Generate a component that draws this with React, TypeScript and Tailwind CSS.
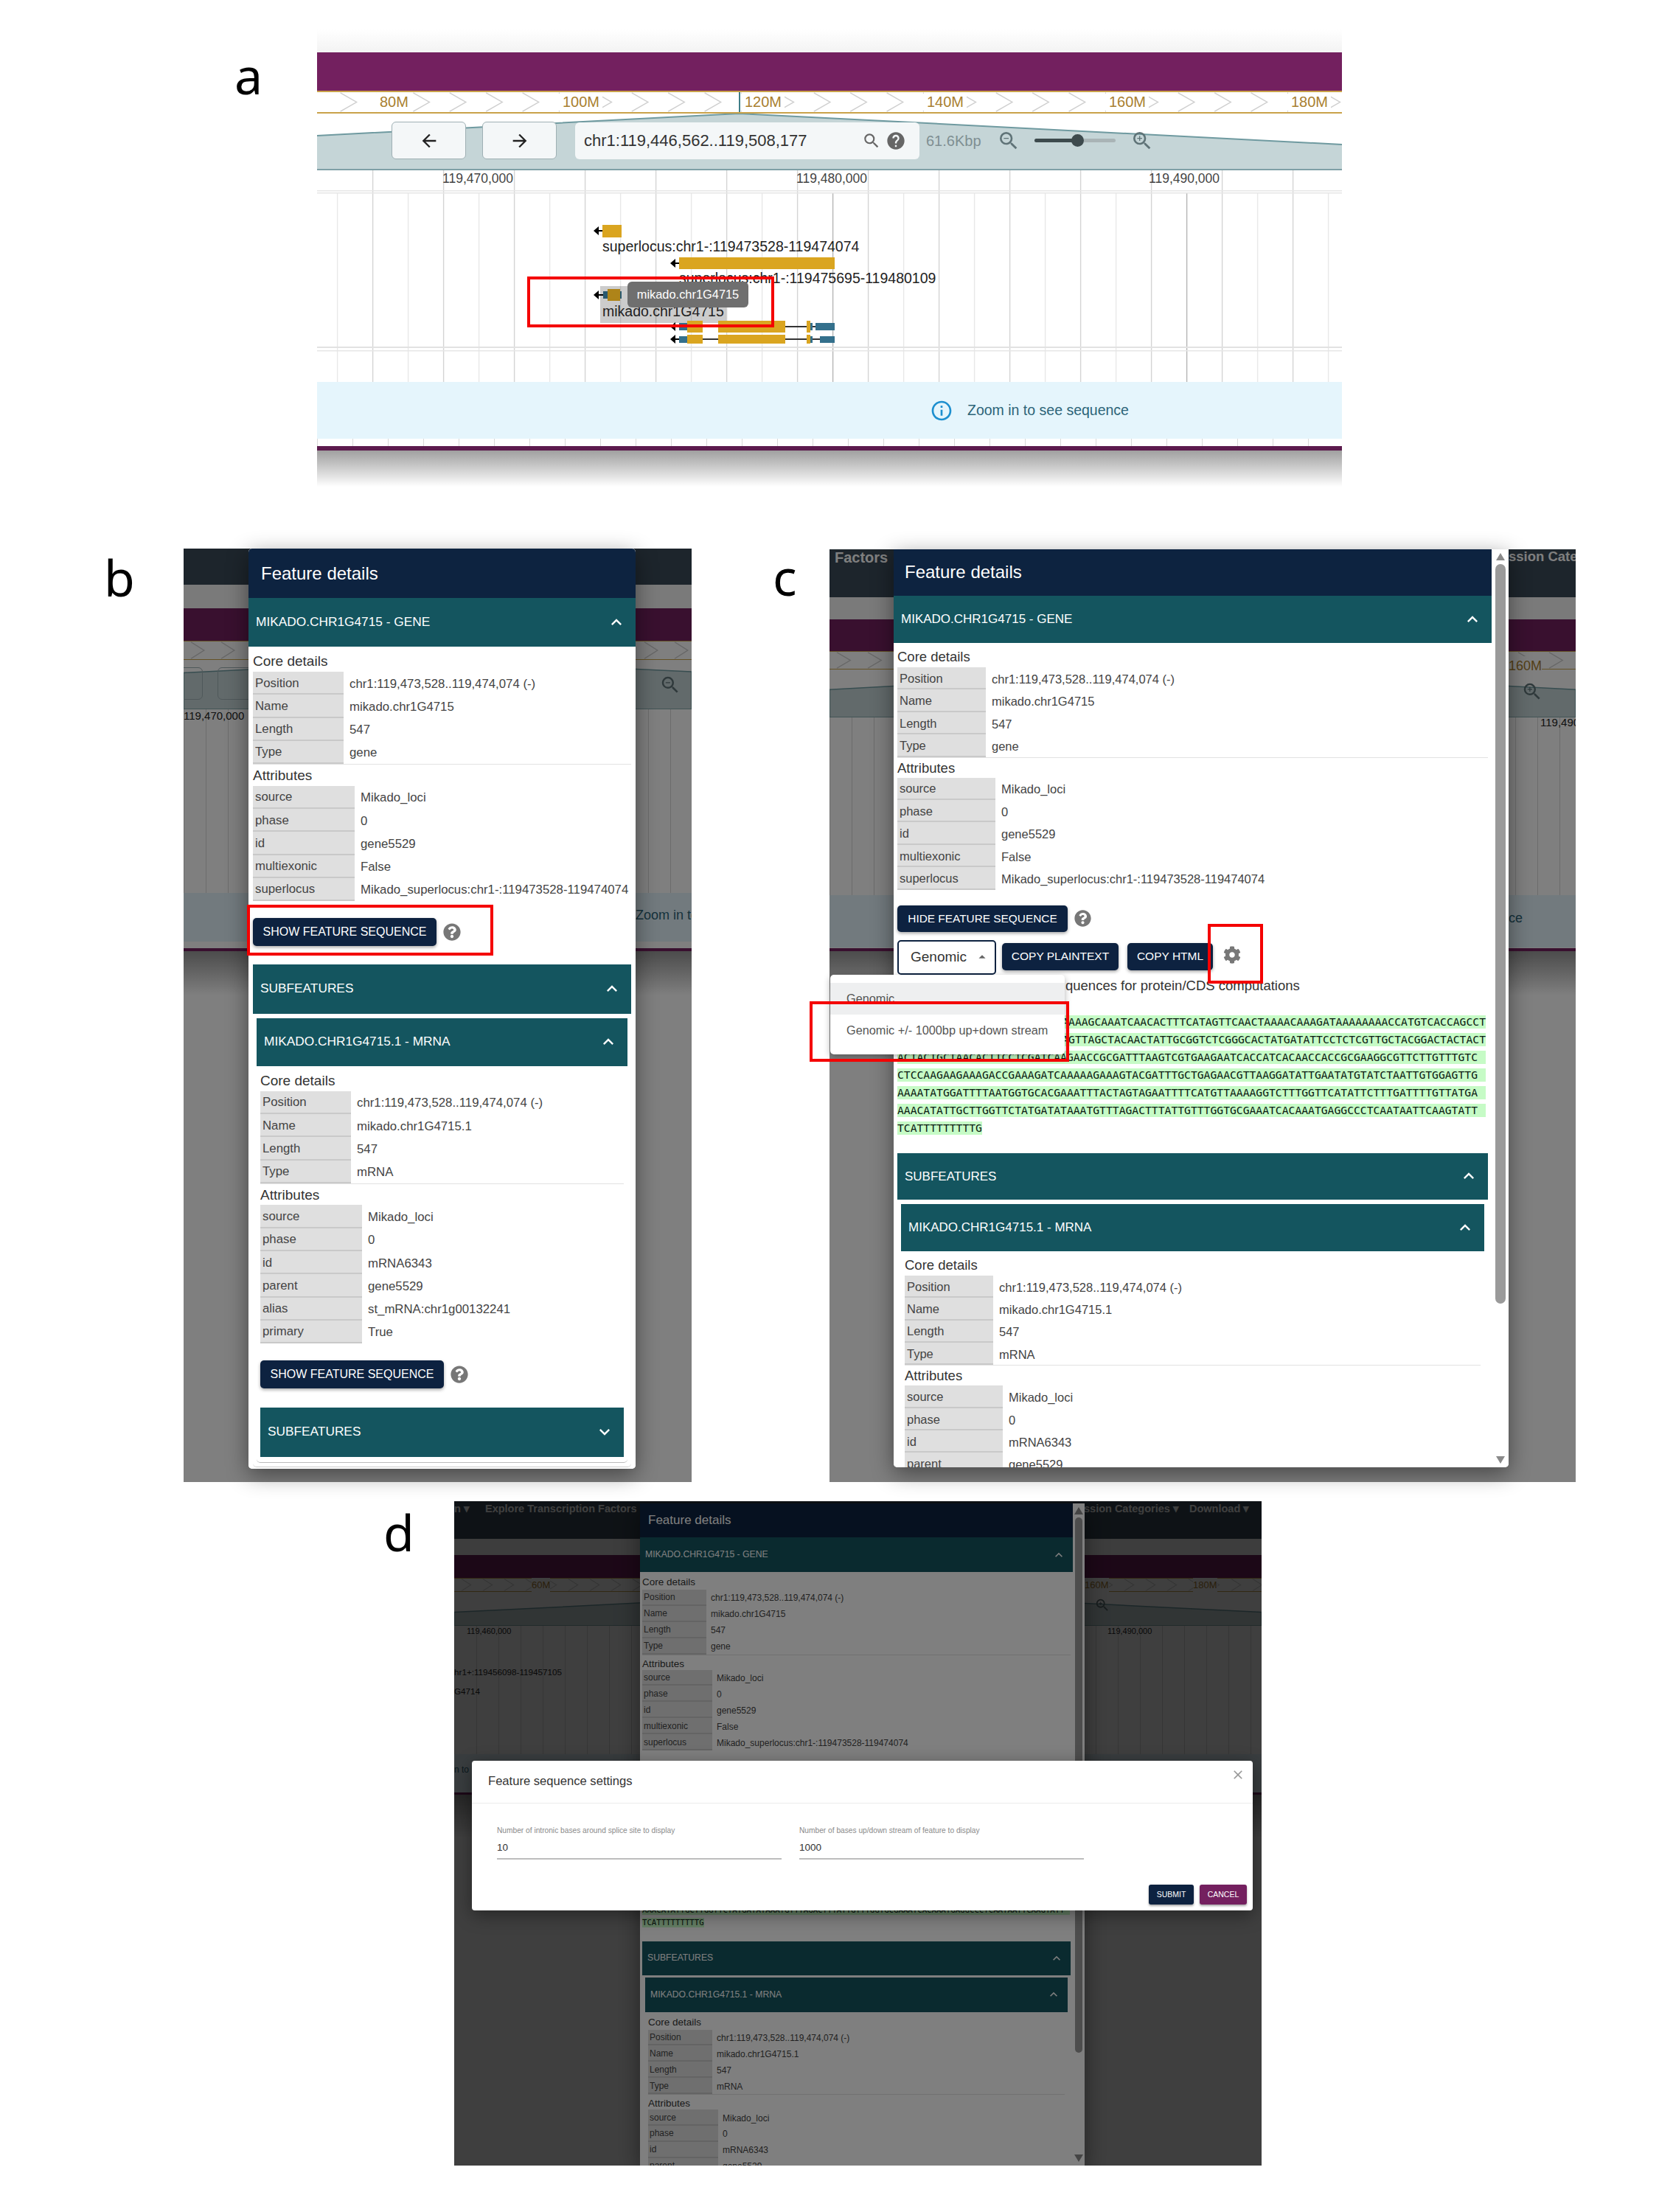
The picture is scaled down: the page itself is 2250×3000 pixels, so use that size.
import React from "react";
import { FaCog, FaQuestionCircle } from "react-icons/fa";
import {
  MdArrowBack,
  MdArrowDropUp,
  MdArrowForward,
  MdClose,
  MdExpandLess,
  MdExpandMore,
  MdHelp,
  MdInfoOutline,
  MdSearch,
  MdZoomIn,
  MdZoomOut,
} from "react-icons/md";

const geneCore = [
  ["Position", "chr1:119,473,528..119,474,074 (-)"],
  ["Name", "mikado.chr1G4715"],
  ["Length", "547"],
  ["Type", "gene"],
];
const geneAttrs = [
  ["source", "Mikado_loci"],
  ["phase", "0"],
  ["id", "gene5529"],
  ["multiexonic", "False"],
  ["superlocus", "Mikado_superlocus:chr1-:119473528-119474074"],
];
const mrnaCore = [
  ["Position", "chr1:119,473,528..119,474,074 (-)"],
  ["Name", "mikado.chr1G4715.1"],
  ["Length", "547"],
  ["Type", "mRNA"],
];
const mrnaAttrs = [
  ["source", "Mikado_loci"],
  ["phase", "0"],
  ["id", "mRNA6343"],
  ["parent", "gene5529"],
  ["alias", "st_mRNA:chr1g00132241"],
  ["primary", "True"],
];
const seqLines = [
  "AAAAGCAAATCAACACTTTCATAGTTCAACTAAAACAAAGATAAAAAAAACCATGTCACCAGCCT",
  "AGTTAGCTACAACTATTGCGGTCTCGGGCACTATGATATTCCTCTCGTTGCTACGGACTACTACT",
  "ACTACTGCTAACACTTCCTCGATCAAGAACCGCGATTTAAGTCGTGAAGAATCACCATCACAACCACCGCGAAGGCGTTCTTGTTTGTC",
  "CTCCAAGAAGAAAGACCGAAAGATCAAAAAGAAAGTACGATTTGCTGAGAACGTTAAGGATATTGAATATGTATCTAATTGTGGAGTTG",
  "AAAATATGGATTTTAATGGTGCACGAAATTTACTAGTAGAATTTTCATGTTAAAAGGTCTTTGGTTCATATTCTTTGATTTTGTTATGA",
  "AAACATATTGCTTGGTTCTATGATATAAATGTTTAGACTTTATTGTTTGGTGCGAAATCACAAATGAGGCCCTCAATAATTCAAGTATT",
  "TCATTTTTTTTTG",
];

// one set of sizes per screenshot, the three dialogs are the same thing at different zoom
const SIZE_B = {
  header: "h-[67px] pl-[17px] text-[24px]",
  geneAcc: "h-[66px] pl-[10px] pr-[12px] text-[17.3px]",
  subAcc: "h-[67px] pl-[10px] pr-[12px] text-[17.3px]",
  mrnaAcc: "h-[65px] pl-[10px] pr-[12px] text-[17.3px]",
  accIcon: "size-[28px]",
  body: "px-[6px]",
  nested: "mt-[6px] mx-[5px]",
  nestedBody: "px-[5px]",
  text: "text-[16.8px]",
  coreHead: "h-[34px] pt-[8px] text-[19px] leading-[24px]",
  attrHead: "h-[29.5px] pt-[3px] text-[19px] leading-[24px]",
  row: "h-[31.3px]",
  keyCore: "w-[123px] pl-[3px] pt-[1px]",
  keyAttr: "w-[138px] pl-[3px] pt-[1px]",
  valCore: "pl-[8px] pt-[1px]",
  btnRow: "mt-[22.5px]",
  btn: "h-[38px] w-[249px] text-[16px]",
  help: "ml-[9px] size-[24px]",
  subTop: "mt-[25px]",
  nestedSubTop: "mt-[26px]",
  tools: "",
  select: "",
  copy1: "",
  copy2: "",
  gear: "",
  note: "",
  seq: "",
  seqLine: "",
  seqHighlight: "",
  seqWidth: "",
};

const SIZE_C = {
  header: "h-[63px] pl-[15px] pb-[2px] text-[24px]",
  geneAcc: "h-[64px] pl-[10px] pr-[12px] text-[17px]",
  subAcc: "h-[63px] pl-[10px] pr-[12px] text-[17px]",
  mrnaAcc: "h-[64px] pl-[10px] pr-[12px] text-[17px]",
  accIcon: "size-[28px]",
  body: "px-[5px]",
  nested: "mt-[6px] mx-[5px]",
  nestedBody: "px-[5px]",
  text: "text-[16.5px]",
  coreHead: "h-[33px] pt-[7px] text-[18.5px] leading-[24px]",
  attrHead: "h-[28px] pt-[2px] text-[18.5px] leading-[24px]",
  row: "h-[30.4px]",
  keyCore: "w-[120px] pl-[3px] pt-[2px]",
  keyAttr: "w-[133px] pl-[3px] pt-[2px]",
  valCore: "pl-[8px] pt-[2px]",
  btnRow: "mt-[21px]",
  btn: "h-[36px] w-[231px] text-[15.4px]",
  help: "ml-[9px] size-[23px]",
  subTop: "mt-[22px]",
  nestedSubTop: "mt-[26px]",
  tools: "mt-[11px] h-[47px]",
  select: "h-[47px] w-[134px] pl-[16px] pr-[6px] text-[19px] border-2",
  copy1: "ml-[8px] h-[37px] w-[158px] text-[15.5px]",
  copy2: "ml-[12px] h-[37px] w-[116px] text-[15.5px]",
  gear: "ml-[14px] size-[24px]",
  note: "h-[30px] pl-[228px] text-[18.5px] leading-[30px]",
  seq: "mt-[23px] text-[14.7px]",
  seqLine: "h-[23.9px]",
  seqHighlight: "h-[18px]",
  seqWidth: "w-[798px]",
};

const SIZE_D = {
  header: "h-[46px] pl-[11px] text-[17px]",
  geneAcc: "h-[47px] pl-[7px] pr-[9px] text-[12.2px]",
  subAcc: "h-[46px] pl-[7px] pr-[9px] text-[12.2px]",
  mrnaAcc: "h-[46.5px] pl-[7px] pr-[9px] text-[12.2px]",
  accIcon: "size-[20px]",
  body: "px-[3px]",
  nested: "mt-[3.5px] mx-[4px]",
  nestedBody: "px-[4px]",
  text: "text-[12px]",
  coreHead: "h-[24px] pt-[5px] text-[13.5px] leading-[18px]",
  attrHead: "h-[21px] pt-[3px] text-[13.5px] leading-[18px]",
  row: "h-[21.9px]",
  keyCore: "w-[87px] pl-[2px] pt-[1px]",
  keyAttr: "w-[95px] pl-[2px] pt-[1px]",
  valCore: "pl-[6px] pt-[1px]",
  btnRow: "mt-[16px]",
  btn: "h-[26px] w-[168px] text-[11.2px]",
  help: "ml-[6px] size-[17px]",
  subTop: "mt-[16.5px]",
  nestedSubTop: "mt-[18px]",
  tools: "mt-[8px] h-[34px]",
  select: "h-[34px] w-[97px] pl-[12px] pr-[4px] text-[14px] border",
  copy1: "ml-[6px] h-[27px] w-[114px] text-[11px]",
  copy2: "ml-[9px] h-[27px] w-[84px] text-[11px]",
  gear: "ml-[10px] size-[17px]",
  note: "h-[21px] pl-[165px] text-[13.5px] leading-[21px]",
  seq: "mt-[18px] text-[10.7px]",
  seqLine: "h-[17px]",
  seqHighlight: "h-[13px]",
  seqWidth: "w-[580px]",
};

type Sizes = typeof SIZE_B;

const Accordion = ({
  title,
  open = true,
  className,
  iconClass,
}: {
  title: string;
  open?: boolean;
  className: string;
  iconClass: string;
}) => (
  <div className={`flex shrink-0 items-center justify-between bg-[#14555f] uppercase text-white ${className}`}>
    <span>{title}</span>
    {open ? <MdExpandLess className={iconClass} /> : <MdExpandMore className={iconClass} />}
  </div>
);

const KvRows = ({
  rows,
  keyClass,
  s,
}: {
  rows: string[][];
  keyClass: string;
  s: Sizes;
}) => (
  <div className={s.text}>
    {rows.map(([k, v]) => (
      <div key={k} className={`flex items-stretch ${s.row}`}>
        <div className={`flex shrink-0 items-center border-b-2 border-[#c9c9c9] bg-[#dfdfdf] text-[#444] ${keyClass}`}>
          {k}
        </div>
        <div className={`flex items-center whitespace-nowrap text-[#444] ${s.valCore}`}>{v}</div>
      </div>
    ))}
  </div>
);

const Details = ({ core, attrs, s }: { core: string[][]; attrs: string[][]; s: Sizes }) => (
  <>
    <div className={`text-[#333] ${s.coreHead}`}>Core details</div>
    <KvRows rows={core} keyClass={s.keyCore} s={s} />
    <div className={`border-t border-[#e2e2e2] text-[#333] ${s.attrHead}`}>Attributes</div>
    <KvRows rows={attrs} keyClass={s.keyAttr} s={s} />
  </>
);

const NavyButton = ({ label, className }: { label: string; className: string }) => (
  <button className={`flex shrink-0 items-center justify-center whitespace-nowrap rounded-[5px] bg-[#0d2240] text-white shadow-[0_2px_4px_rgba(0,0,0,0.35)] ${className}`}>
    {label}
  </button>
);

const SequencePanel = ({ s }: { s: Sizes }) => (
  <>
    <div className={`flex items-start ${s.tools}`}>
      <div className={`flex shrink-0 items-center justify-between rounded-[5px] border-[#0d2240] text-[#333] ${s.select}`}>
        Genomic
        <MdArrowDropUp className="size-[22px] text-[#666]" />
      </div>
      <NavyButton label="COPY PLAINTEXT" className={`mt-[4px] ${s.copy1}`} />
      <NavyButton label="COPY HTML" className={`mt-[4px] ${s.copy2}`} />
      <FaCog className={`mt-[8px] text-[#777] ${s.gear}`} />
    </div>
    <div className={`whitespace-nowrap text-[#333] ${s.note}`}>quences for protein/CDS computations</div>
    <div className={`font-['DejaVu_Sans_Mono',monospace] text-[#0b1a12] ${s.seq}`}>
      {seqLines.map((line, i) => (
        <div key={line} className={`flex items-center ${s.seqLine}`}>
          <div
            className={`flex items-center bg-[#c6fbc6] ${s.seqHighlight} ${i < 2 ? "justify-end" : ""} ${
              i < 6 ? s.seqWidth : "w-fit"
            }`}
          >
            {line}
          </div>
        </div>
      ))}
    </div>
  </>
);

const FeatureDetails = ({ s, showSequence }: { s: Sizes; showSequence: boolean }) => (
  <div className="flex h-full grow flex-col overflow-hidden bg-white">
    <div className={`flex shrink-0 items-center bg-[#0d2340] text-white ${s.header}`}>Feature details</div>
    <Accordion title="mikado.chr1G4715 - gene" className={s.geneAcc} iconClass={s.accIcon} />
    <div className={s.body}>
      <Details core={geneCore} attrs={geneAttrs} s={s} />
      <div className={`flex items-center ${s.btnRow}`}>
        <NavyButton
          label={showSequence ? "HIDE FEATURE SEQUENCE" : "SHOW FEATURE SEQUENCE"}
          className={s.btn}
        />
        <FaQuestionCircle className={`text-[#777] ${s.help}`} />
      </div>
      {showSequence && <SequencePanel s={s} />}
      <div className={s.subTop}>
        <Accordion title="Subfeatures" className={s.subAcc} iconClass={s.accIcon} />
      </div>
      <div className="rounded-b-[5px] border-b border-[#ccc] pb-[5px]">
        <div className={`rounded-b-[5px] border-b border-[#bbb] pb-[7px] ${s.nested}`}>
          <Accordion title="mikado.chr1G4715.1 - mRNA" className={s.mrnaAcc} iconClass={s.accIcon} />
          <div className={s.nestedBody}>
            <Details core={mrnaCore} attrs={mrnaAttrs} s={s} />
            <div className={`flex items-center ${s.btnRow}`}>
              <NavyButton label="SHOW FEATURE SEQUENCE" className={s.btn} />
              <FaQuestionCircle className={`text-[#777] ${s.help}`} />
            </div>
            <div className={s.nestedSubTop}>
              <Accordion title="Subfeatures" open={false} className={s.subAcc} iconClass={s.accIcon} />
            </div>
          </div>
        </div>
      </div>
    </div>
  </div>
);

const Scrollbar = ({ col, thumb }: { col: string; thumb: string }) => (
  <div className={`flex h-full shrink-0 flex-col items-center bg-white pt-[5px] pb-[5px] ${col}`}>
    <div className="h-0 w-0 border-x-[6px] border-b-[10px] border-x-transparent border-b-[#8a8a8a]" />
    <div className={`rounded-full bg-[#9a9a9a] ${thumb}`} />
    <div className="grow" />
    <div className="h-0 w-0 border-x-[6px] border-t-[10px] border-x-transparent border-t-[#8a8a8a]" />
  </div>
);

// ruler arrows, drawn at the band's own pixel size
const Chevrons = ({ width, x0, step, tip, color = "#cfcfcf" }: { width: number; x0: number; step: number; tip: number; color?: string }) => (
  <svg className="absolute inset-0 h-full w-full" viewBox={`0 0 ${width} 30`} preserveAspectRatio="none">
    {Array.from({ length: Math.ceil(width / step) + 1 }, (_, i) => x0 + i * step).map((x) => (
      <path key={x} d={`M${x} 1 L${x + tip} 15 L${x} 29`} fill="none" stroke={color} strokeWidth="1.6" />
    ))}
  </svg>
);

type BackdropBands = {
  bar: string;
  gap: string;
  purple: string;
  ruler: string;
  over: string;
  tracks: string;
  notice: string;
  strip: string;
  line: string;
  shape: string;
  width: number;
  step: number;
};

const Backdrop = ({ b, children }: { b: BackdropBands; children?: React.ReactNode }) => (
  <div className="absolute inset-0 flex flex-col overflow-hidden bg-white">
    <div className={`shrink-0 bg-[#3a4a58] ${b.bar}`} />
    <div className={`shrink-0 bg-[#f4f4f4] ${b.gap}`} />
    <div className={`shrink-0 bg-[#73205f] ${b.purple}`} />
    <div className={`relative shrink-0 border-y border-[#c9a24a] bg-white ${b.ruler}`}>
      <Chevrons width={b.width} x0={10} step={b.step} tip={b.step / 2.3} />
    </div>
    <div className={`relative shrink-0 bg-white ${b.over}`}>
      <svg className="absolute inset-0 h-full w-full" viewBox="0 0 100 100" preserveAspectRatio="none">
        <path d={b.shape} fill="#c5d5d7" stroke="#6f9aa0" strokeWidth="1.5" vectorEffect="non-scaling-stroke" />
      </svg>
    </div>
    <div className={`shrink-0 bg-[repeating-linear-gradient(90deg,#d9d9d9_0,#d9d9d9_1px,transparent_1px,transparent_30px)] ${b.tracks}`} />
    <div className={`shrink-0 bg-[#e5f5fc] ${b.notice}`} />
    <div className={`shrink-0 bg-white ${b.strip}`} />
    <div className={`shrink-0 bg-[#73205f] ${b.line}`} />
    <div className="h-[60px] shrink-0 bg-gradient-to-b from-[#999] to-white" />
    {children}
  </div>
);

const RedBox = ({ className }: { className: string }) => (
  <div className={`pointer-events-none absolute z-30 border-[4px] border-[#f40000] ${className}`} />
);

const PanelLetter = ({ children, className }: { children: string; className: string }) => (
  <div className={`shrink-0 font-['Noto_Sans',sans-serif] text-[68px] leading-none text-black ${className}`}>
    {children}
  </div>
);

// genome view grid + features, page coordinates shifted into the track box
const TrackDrawing = () => {
  const lines = Array.from({ length: 29 }, (_, i) => 457.6 + i * 48);
  const arrow = (x: number, y: number, to: number) => (
    <g>
      <polygon points={`${x},${y} ${x + 7},${y - 6} ${x + 7},${y + 6}`} fill="#000" />
      <line x1={x + 5} x2={to} y1={y} y2={y} stroke="#000" strokeWidth="2" />
    </g>
  );
  const gold = "#daa520";
  const blue = "#34708c";
  return (
    <svg className="absolute inset-0 h-full w-full" viewBox="430 231 1390 287">
      {lines.map((x, i) => (
        <line
          key={x}
          x1={x}
          x2={x}
          y1={i % 2 ? 231 : 262}
          y2={518}
          stroke={i === 14 || i === 24 ? "#b5b5b5" : i % 2 ? "#d4d4d4" : "#e8e8e8"}
          strokeWidth="1.4"
        />
      ))}
      <rect x="430" y="258" width="1390" height="1.5" fill="#e6e6e6" />
      <rect x="430" y="261" width="1390" height="1.5" fill="#e6e6e6" />
      <rect x="430" y="470" width="1390" height="2" fill="#e2e2e2" />
      <rect x="430" y="475" width="1390" height="1.5" fill="#e6e6e6" />

      {arrow(805, 313, 817)}
      <rect x="817" y="305" width="26" height="17" fill={gold} />
      {arrow(909, 357, 921)}
      <rect x="921" y="349" width="211" height="16" fill={gold} />

      {arrow(805, 400, 818)}
      <rect x="818" y="395" width="25" height="10" fill={blue} />
      <rect x="824" y="392" width="17" height="16" fill={gold} />
      <rect x="814" y="388" width="171" height="50" fill="#000" opacity="0.2" />

      {arrow(909, 443, 921)}
      <line x1="1065" x2="1106" y1="443" y2="443" stroke="#333" strokeWidth="2" />
      <rect x="921" y="438" width="11" height="10" fill={blue} />
      <rect x="932" y="435" width="21" height="16" fill={gold} />
      <rect x="974" y="435" width="91" height="16" fill={gold} />
      <rect x="1094" y="435" width="5" height="16" fill={gold} />
      <rect x="1099" y="438" width="3" height="10" fill={blue} />
      <rect x="1106" y="438" width="26" height="10" fill={blue} />

      {arrow(909, 460, 921)}
      <line x1="953" x2="1112" y1="460" y2="460" stroke="#333" strokeWidth="2" />
      <rect x="921" y="456" width="11" height="9" fill={blue} />
      <rect x="932" y="454" width="21" height="12" fill={gold} />
      <rect x="974" y="454" width="91" height="12" fill={gold} />
      <rect x="1094" y="454" width="5" height="12" fill={gold} />
      <rect x="1099" y="456" width="3" height="9" fill={blue} />
      <rect x="1112" y="456" width="20" height="9" fill={blue} />
    </svg>
  );
};

const rulerLabels = [
  ["80M", "left-[81px]"],
  ["100M", "left-[329px]"],
  ["120M", "left-[576px]"],
  ["140M", "left-[823px]"],
  ["160M", "left-[1070px]"],
  ["180M", "left-[1317px]"],
];

const GenomeView = () => (
  <section className="relative flex h-[620px] w-[1390px] shrink-0 flex-col overflow-hidden bg-white">
    <div className="h-[31px] shrink-0 bg-gradient-to-b from-white to-[#f3f3f3]" />
    <div className="h-[52px] shrink-0 bg-[#73205f]" />
    <div className="relative h-[31px] shrink-0 border-y-2 border-[#c9a24a] bg-white">
      <Chevrons width={1390} x0={31.6} step={49.4} tip={22} />
      <div className="absolute left-[572px] top-0 h-full w-[2px] bg-[#3f7e88]" />
      {rulerLabels.map(([label, pos]) => (
        <span key={label} className={`absolute top-0 bg-white px-[4px] text-[20px] leading-[27px] text-[#a9802f] ${pos}`}>
          {label}
        </span>
      ))}
    </div>

    <div className="relative h-[77px] shrink-0">
      <svg className="absolute inset-0 h-full w-full" viewBox="0 0 1390 77" preserveAspectRatio="none">
        <path d="M0 30 L572 0 L1390 42 V76 H0Z" fill="#c5d5d7" />
        <path d="M0 30 L572 0 L1390 42" fill="none" stroke="#6f9aa0" strokeWidth="2" />
        <line x1="0" x2="1390" y1="76" y2="76" stroke="#7fa0a6" strokeWidth="2" />
      </svg>
      <div className="relative flex items-center pl-[101px] pt-[11px]">
        <button className="flex h-[51px] w-[101px] items-center justify-center rounded-[6px] border border-[#9fb0b4] bg-[#f4f7f8] text-[#222]">
          <MdArrowBack className="size-[28px]" />
        </button>
        <button className="ml-[22px] flex h-[51px] w-[101px] items-center justify-center rounded-[6px] border border-[#9fb0b4] bg-[#f4f7f8] text-[#222]">
          <MdArrowForward className="size-[28px]" />
        </button>
        <div className="ml-[25px] flex h-[50px] w-[467px] items-center rounded-[6px] bg-[#f4f7f8] pl-[12px] text-[22px] text-[#333]">
          <span className="whitespace-nowrap">chr1:119,446,562..119,508,177</span>
          <MdSearch className="ml-[74px] size-[26px] text-[#666]" />
          <MdHelp className="ml-[6px] size-[28px] text-[#666]" />
        </div>
        <span className="ml-[9px] text-[20px] text-[#7f8f92]">61.6Kbp</span>
        <MdZoomOut className="ml-[21px] size-[32px] text-[#5f7377]" />
        <div className="relative ml-[19px] h-[5px] w-[110px] rounded-full bg-[#a9b4b6]">
          <div className="h-full w-[58px] rounded-full bg-[#3d4a4d]" />
          <div className="absolute left-[50px] top-[-6px] size-[17px] rounded-full bg-[#3d4a4d]" />
        </div>
        <MdZoomIn className="ml-[20px] size-[32px] text-[#5f7377]" />
      </div>
    </div>

    <div className="relative h-[287px] shrink-0">
      <TrackDrawing />
      <span className="absolute left-[158px] top-[-2px] w-[120px] text-center text-[17.5px] text-[#444]">119,470,000</span>
      <span className="absolute left-[638px] top-[-2px] w-[120px] text-center text-[17.5px] text-[#444]">119,480,000</span>
      <span className="absolute left-[1116px] top-[-2px] w-[120px] text-center text-[17.5px] text-[#444]">119,490,000</span>
      <span className="absolute left-[387px] top-[91px] text-[19.5px] leading-[24px] text-[#222]">superlocus:chr1-:119473528-119474074</span>
      <span className="absolute left-[491px] top-[134px] text-[19.5px] leading-[24px] text-[#222]">superlocus:chr1-:119475695-119480109</span>
      <span className="absolute left-[387px] top-[179px] text-[19.5px] leading-[24px] text-[#222]">mikado.chr1G4715</span>
      <div className="absolute left-[421px] top-[151px] flex h-[35px] w-[164px] items-center justify-center rounded-[6px] bg-[#6f6f6f] text-[16.4px] text-white">
        mikado.chr1G4715
      </div>
    </div>

    <div className="flex h-[77px] shrink-0 items-center bg-[#e5f5fc] pl-[831px]">
      <MdInfoOutline className="size-[32px] text-[#1d8fcf]" />
      <span className="ml-[19px] text-[19.5px] text-[#2c6478]">Zoom in to see sequence</span>
    </div>
    <div className="h-[10px] shrink-0 bg-[repeating-linear-gradient(90deg,#d9d9d9_0,#d9d9d9_1px,transparent_1px,transparent_48px)]" />
    <div className="h-[6px] shrink-0 bg-[#5c1a4d]" />
    <div className="h-[49px] shrink-0 bg-gradient-to-b from-[#a0a0a0] to-white" />
    <RedBox className="left-[285px] top-[335px] h-[69px] w-[335px]" />
  </section>
);

const bandsB: BackdropBands = {
  bar: "h-[49px]",
  gap: "h-[32px]",
  purple: "h-[44px]",
  ruler: "h-[26px]",
  over: "h-[67px]",
  tracks: "h-[249px]",
  notice: "h-[66px]",
  strip: "h-[9px]",
  line: "h-[4px]",
  shape: "M0 26 L50 0 L100 24 V100 H0Z",
  width: 689,
  step: 41,
};
const bandsC: BackdropBands = {
  bar: "h-[65px]",
  gap: "h-[30px]",
  purple: "h-[43px]",
  ruler: "h-[25px]",
  over: "h-[65px]",
  tracks: "h-[241px]",
  notice: "h-[71px]",
  strip: "h-[1px]",
  line: "h-[4px]",
  shape: "M0 42 L50 0 L100 42 V100 H0Z",
  width: 1012,
  step: 42,
};
const bandsD: BackdropBands = {
  bar: "h-[51px]",
  gap: "h-[22px]",
  purple: "h-[31px]",
  ruler: "h-[19px]",
  over: "h-[46px]",
  tracks: "h-[174px]",
  notice: "h-[52px]",
  strip: "h-0",
  line: "h-[3px]",
  shape: "M0 60 L50 0 L100 60 V100 H0Z",
  width: 1095,
  step: 29,
};

const PanelB = () => (
  <div className="relative h-[1266px] w-[689px] shrink-0">
    <Backdrop b={bandsB}>
      <div className="absolute left-[-20px] top-[161px] h-[44px] w-[46px] rounded-[6px] border border-[#9fb0b4]" />
      <div className="absolute left-[46px] top-[161px] h-[44px] w-[60px] rounded-[6px] border border-[#9fb0b4]" />
      <span className="absolute left-0 top-[216px] text-[15px] text-[#222]">119,470,000</span>
      <span className="absolute left-[613px] top-[484px] whitespace-nowrap text-[18px] text-[#2c6478]">Zoom in to</span>
      <MdZoomOut className="absolute left-[645px] top-[170px] size-[30px] text-[#5f7377]" />
    </Backdrop>
    <div className="absolute inset-0 bg-black/50" />
    <div className="absolute left-[88px] top-0 h-[1248px] w-[525px] overflow-hidden rounded-[5px] bg-white shadow-[0_8px_30px_rgba(0,0,0,0.45)]">
      <FeatureDetails s={SIZE_B} showSequence={false} />
    </div>
    <RedBox className="left-[86px] top-[483px] h-[69px] w-[334px]" />
  </div>
);

const PanelC = () => (
  <div className="relative mt-[1px] h-[1265px] w-[1012px] shrink-0">
    <Backdrop b={bandsC}>
      <span className="absolute left-[7px] top-[-4px] whitespace-nowrap text-[20px] font-bold text-white">Factors</span>
      <span className="absolute left-[921px] top-[-4px] whitespace-nowrap text-[18.5px] font-bold text-white">ssion Cate</span>
      <span className="absolute left-[921px] top-[145px] bg-white text-[18px] text-[#a9802f]">160M</span>
      <MdZoomIn className="absolute left-[938px] top-[178px] size-[30px] text-[#5f7377]" />
      <span className="absolute left-[964px] top-[224px] whitespace-nowrap text-[15px] text-[#222]">119,490</span>
      <span className="absolute left-[921px] top-[487px] text-[18px] text-[#2c6478]">ce</span>
    </Backdrop>
    <div className="absolute inset-0 bg-black/50" />
    <div className="absolute left-[87px] top-0 flex h-[1245px] w-[834px] overflow-hidden rounded-b-[5px] bg-white shadow-[0_8px_30px_rgba(0,0,0,0.45)]">
      <FeatureDetails s={SIZE_C} showSequence />
      <Scrollbar col="w-[23px]" thumb="mt-[5px] h-[1003px] w-[14px]" />
    </div>
    <div className="absolute left-[1px] top-[577px] z-20 flex h-[108px] w-[318px] flex-col rounded-[5px] bg-white pt-[11px] text-[16.3px] text-[#555] shadow-[0_3px_10px_rgba(0,0,0,0.3)]">
      <div className="flex h-[43px] items-center bg-[#eeeff0] pl-[22px]">Genomic</div>
      <div className="flex h-[43px] items-center pl-[22px]">Genomic +/- 1000bp up+down stream</div>
    </div>
    <RedBox className="left-[513px] top-[508px] h-[81px] w-[75px]" />
    <RedBox className="left-[-27px] top-[613px] h-[82px] w-[352px]" />
  </div>
);

const SettingsField = ({ label, value }: { label: string; value: string }) => (
  <div className="flex w-[386px] flex-col border-b-2 border-[#bdbdbd]">
    <span className="text-[10.2px] leading-[14px] text-[#8a8a8a]">{label}</span>
    <span className="mt-[6px] h-[24px] text-[13.5px] leading-[20px] text-[#333]">{value}</span>
  </div>
);

const PanelD = () => (
  <div className="relative h-[901px] w-[1095px] shrink-0 overflow-hidden">
    <Backdrop b={bandsD}>
      <span className="absolute left-0 top-0 whitespace-nowrap text-[14.5px] font-bold text-white">n ▾</span>
      <span className="absolute left-[42px] top-0 whitespace-nowrap text-[14.5px] font-bold text-white">Explore Transcription Factors</span>
      <span className="absolute left-[854px] top-0 whitespace-nowrap text-[14.5px] font-bold text-white">ssion Categories ▾</span>
      <span className="absolute left-[997px] top-0 whitespace-nowrap text-[14.5px] font-bold text-white">Download ▾</span>
      <span className="absolute left-[105px] top-[104px] bg-white text-[13px] text-[#a9802f]">60M</span>
      <span className="absolute left-[855px] top-[104px] bg-white text-[13px] text-[#a9802f]">160M</span>
      <span className="absolute left-[1002px] top-[104px] bg-white text-[13px] text-[#a9802f]">180M</span>
      <span className="absolute left-[17px] top-[168px] text-[11px] text-[#222]">119,460,000</span>
      <span className="absolute left-[886px] top-[168px] text-[11px] text-[#222]">119,490,000</span>
      <span className="absolute left-0 top-[223px] whitespace-nowrap text-[11.7px] text-[#222]">hr1+:119456098-119457105</span>
      <span className="absolute left-0 top-[249px] whitespace-nowrap text-[11.7px] text-[#222]">G4714</span>
      <span className="absolute left-0 top-[355px] whitespace-nowrap text-[12px] text-[#2c6478]">n to</span>
      <MdZoomIn className="absolute left-[868px] top-[130px] size-[22px] text-[#5f7377]" />
    </Backdrop>
    <div className="absolute inset-0 bg-black/50" />
    <div className="absolute left-[252px] top-[3px] flex h-[898px] w-[603px] overflow-hidden bg-white shadow-[0_8px_30px_rgba(0,0,0,0.45)]">
      <FeatureDetails s={SIZE_D} showSequence />
      <Scrollbar col="w-[16px]" thumb="mt-[4px] h-[726px] w-[10px]" />
    </div>
    <div className="absolute inset-0 bg-black/50" />
    <div className="absolute left-[24px] top-[352px] flex h-[203px] w-[1059px] flex-col rounded-[4px] bg-white shadow-[0_6px_24px_rgba(0,0,0,0.4)]">
      <div className="relative flex h-[58px] shrink-0 items-center border-b border-[#ececec] pl-[22px] text-[16.6px] text-[#333]">
        Feature sequence settings
        <MdClose className="absolute right-[10px] top-[9px] size-[20px] text-[#999]" />
      </div>
      <div className="flex gap-[24px] pl-[34px] pt-[30px]">
        <SettingsField label="Number of intronic bases around splice site to display" value="10" />
        <SettingsField label="Number of bases up/down stream of feature to display" value="1000" />
      </div>
      <div className="mt-auto flex justify-end gap-[8px] pb-[8px] pr-[8px]">
        <button className="h-[27px] w-[61px] rounded-[3px] bg-[#0d2240] text-[10.5px] text-white shadow-[0_2px_3px_rgba(0,0,0,0.35)]">SUBMIT</button>
        <button className="h-[27px] w-[64px] rounded-[3px] bg-[#74205f] text-[10.5px] text-white shadow-[0_2px_3px_rgba(0,0,0,0.35)]">CANCEL</button>
      </div>
    </div>
  </div>
);

const App: React.FC = () => (
  <div className="flex h-[3000px] w-[2250px] flex-col overflow-hidden bg-white font-['Liberation_Sans',Arial,sans-serif]">
    <div className="flex h-[744px] shrink-0 items-start pl-[318px] pt-[40px]">
      <PanelLetter className="mt-[28px] w-[112px]">a</PanelLetter>
      <GenomeView />
    </div>
    <div className="flex h-[1292px] shrink-0 items-start pl-[141px]">
      <PanelLetter className="mt-[5px] w-[108px]">b</PanelLetter>
      <PanelB />
      <PanelLetter className="ml-[110px] mt-[4px] w-[77px]">c</PanelLetter>
      <PanelC />
    </div>
    <div className="flex shrink-0 items-start pl-[520px]">
      <PanelLetter className="mt-[8px] w-[96px]">d</PanelLetter>
      <PanelD />
    </div>
  </div>
);

export default App;
